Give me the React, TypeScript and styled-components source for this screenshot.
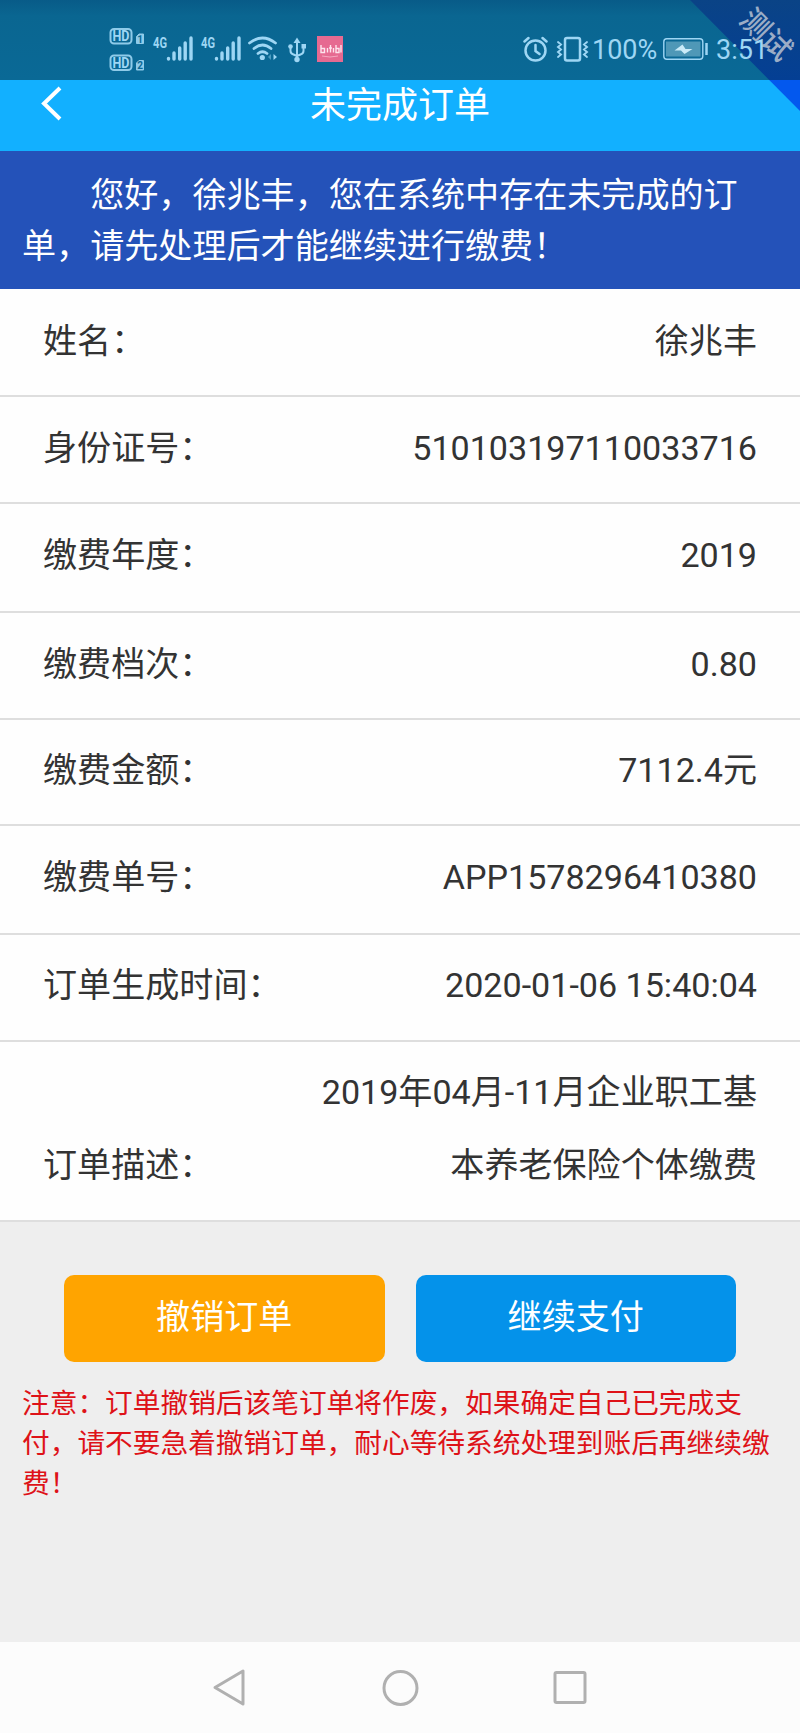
import React from 'react';
import styled, { createGlobalStyle } from 'styled-components';

const GlobalStyle = createGlobalStyle`
  * { box-sizing: border-box; }
  body {
    margin: 0;
    background: #eeeeee;
    font-family: Roboto, 'Noto Sans CJK SC', sans-serif;
  }
`;

const Screen = styled.div`
  position: relative;
  display: flex;
  flex-direction: column;
  width: 800px;
  height: 1733px;
  overflow: hidden;
  background: #eeeeee;
`;

const StatusBar = styled.div`
  display: flex;
  flex: none;
  justify-content: space-between;
  align-items: flex-start;
  height: 80px;
  padding: 28px 23px 0 109px;
  background: linear-gradient(#085b88 0, #0a6691 16px, #0a6996 80px);
  color: #9ed6f4;
`;

const StatusGroup = styled.div`
  display: flex;
  align-items: flex-start;
`;

const StatusText = styled.span<{ $width: number; $gap?: number }>`
  position: relative;
  z-index: 2;
  width: ${(p) => p.$width}px;
  margin-right: ${(p) => p.$gap ?? 0}px;
  margin-top: 8px;
  font-size: 27px;
  line-height: 28px;
  white-space: nowrap;
`;

const TestRibbon = styled.div`
  position: absolute;
  top: 0;
  right: 0;
  width: 110px;
  height: 111px;
  clip-path: polygon(0 0, 100% 0, 100% 100%);
  background: linear-gradient(#0a4386 0, #043f94 80px, #0358ee 80px);
`;

const RibbonText = styled.span`
  position: absolute;
  top: 17px;
  left: 45px;
  width: 62px;
  color: #9badc6;
  font-size: 29.5px;
  font-weight: 500;
  line-height: 36px;
  text-align: center;
  transform: rotate(45deg);
`;

const TitleBar = styled.header`
  display: grid;
  flex: none;
  grid-template-columns: 100px 1fr 100px;
  height: 71px;
  background: #12b0ff;
  color: #fff;
`;

const Title = styled.h1`
  margin: 0;
  font-size: 36px;
  font-weight: 400;
  line-height: 52px;
  text-align: center;
`;

const BackIcon = styled.svg`
  margin: 4px 0 0 37px;
`;

const Banner = styled.p`
  flex: none;
  height: 138px;
  margin: 0;
  padding: 19px 22px 0;
  background: #2452b9;
  color: #fff;
  font-size: 34.1px;
  line-height: 51px;
  text-indent: 2em;
`;

const Details = styled.dl`
  flex: none;
  margin: 0;
  background: #fefefe;
`;

const Row = styled.div<{ $height: number; $bottom: number }>`
  display: flex;
  justify-content: space-between;
  align-items: flex-end;
  height: ${(p) => p.$height}px;
  padding: 0 43px ${(p) => p.$bottom}px;
  border-bottom: 2px solid #dedede;
  color: #333;
  font-size: 34.1px;
  line-height: 73px;
`;

const Label = styled.dt`
  flex: none;
`;

const Value = styled.dd`
  max-width: 440px;
  margin: 0;
  text-align: right;
`;

const Actions = styled.div`
  display: flex;
  flex: none;
  gap: 31px;
  padding: 53px 64px 0;
`;

const ActionButton = styled.button<{ $color: string }>`
  flex: 1;
  height: 87px;
  padding: 0 0 10px;
  border: 0;
  border-radius: 10px;
  background: ${(p) => p.$color};
  color: #fff;
  font: inherit;
  font-size: 34.1px;
`;

const Notice = styled.p`
  flex: 1;
  margin: 0;
  padding: 22px 22px 0;
  color: #de1218;
  font-size: 27.7px;
  line-height: 40.2px;
`;

const NavBar = styled.nav`
  display: flex;
  flex: none;
  justify-content: space-between;
  height: 91px;
  padding: 24px 210px 0 211px;
  background: #fcfcfc;
`;

const details = [
  { label: '姓名：', value: '徐兆丰', height: 108, bottom: 17 },
  { label: '身份证号：', value: '510103197110033716', height: 107, bottom: 17 },
  { label: '缴费年度：', value: '2019', height: 109, bottom: 19 },
  { label: '缴费档次：', value: '0.80', height: 107, bottom: 17 },
  { label: '缴费金额：', value: '7112.4元', height: 106, bottom: 17 },
  { label: '缴费单号：', value: 'APP1578296410380', height: 109, bottom: 19 },
  { label: '订单生成时间：', value: '2020-01-06 15:40:04', height: 107, bottom: 18 },
  { label: '订单描述：', value: '2019年04月-11月企业职工基本养老保险个体缴费', height: 180, bottom: 18 },
];

const simCards = [
  { slot: '1', y: 28 },
  { slot: '2', y: 54.5 },
];

const NetworkIcons = () => (
  <svg width="240" height="46" viewBox="109 28 240 46" fill="none" fontFamily="Roboto" fontWeight="700">
    {simCards.map(({ slot, y }) => (
      <g key={slot} transform={`translate(109 ${y})`}>
        <rect x="1.500" y="1" width="21" height="14.500" rx="3.500" stroke="#8fcbe9" strokeWidth="2" />
        <text x="3.500" y="13.200" fontSize="14" textLength="17" lengthAdjust="spacingAndGlyphs" fill="#9ed6f4">HD</text>
        <path d="M30 6h4.500v9.500h-7V8.500z" fill="#8fcbe9" stroke="#8fcbe9" strokeLinejoin="round" />
        <text x="31" y="14.500" fontSize="10" textAnchor="middle" fill="#0a6996">{slot}</text>
      </g>
    ))}
    {[0, 48].map((x) => (
      <g key={x} transform={`translate(${x} 0)`}>
        <text x="153" y="47.500" fontSize="15.500" fill="#9ed6f4" textLength="14" lengthAdjust="spacingAndGlyphs">4G</text>
        <path d="M168.500 58.500v.5M174 53v6M179.700 48v11M185.200 43v16M191 38v21" stroke="#9ed6f4" strokeWidth="3.400" strokeLinecap="round" />
      </g>
    ))}
    <path d="M249.500 43Q262.500 33 275.500 43M254 48.500Q262.500 41.500 271 48.500M258 53.500Q262.500 50 267 53.500" stroke="#9ed6f4" strokeWidth="2.800" strokeLinecap="round" />
    <circle cx="262.300" cy="57.500" r="2.600" fill="#9ed6f4" />
    <path d="M273.500 54v6l3.500-3z" fill="#9ed6f4" />
    <path d="M271 54v6l-3-3z" fill="#4a9bc0" />
    <path d="M297 41v18M290.500 47v4q0 2.500 3 3.500l3.500 1.500M303.500 47v4q0 2.500-3 3.500l-3.500 1.500" stroke="#9ed6f4" strokeWidth="2" />
    <path d="M297 37.500l3.500 5.500h-7z" fill="#9ed6f4" />
    <circle cx="290.500" cy="46.500" r="2.300" fill="#9ed6f4" />
    <path d="M301.500 44h4.500v4.500h-4.500z" fill="#9ed6f4" />
    <circle cx="297" cy="59.500" r="2.700" fill="#9ed6f4" />
    <path d="M317 36h26v26h-26z" fill="#e66a91" />
    <path d="M321 45v7.500h3.500v-4H321M327.500 48v4.500M330.500 45v7.500M329 48h3M333.500 48v4.500M336 45v7.500h3v-4h-3M341 45v7.500" stroke="#fde4ed" strokeWidth="1.400" />
    <path d="M322 56q8 2 16 0" stroke="#f4a9c1" />
  </svg>
);

const AlarmIcons = () => (
  <svg width="69" height="34" viewBox="522 28 69 34" fill="none" stroke="#9ed6f4" strokeWidth="2.500" strokeLinecap="round">
    <circle cx="534.500" cy="50.500" r="10" />
    <path d="M534.500 45v6l4 3M523.500 41.500l4-3.500M545.500 41.500l-4-3.500" />
    <rect x="564" y="38" width="15" height="22.500" rx="2" />
    <path d="M557 42l3 2.500-3 2.500 3 2.500-3 2.500 3 2.500-3 2.500M586 42l-3 2.500 3 2.500-3 2.500 3 2.500-3 2.500 3 2.500" strokeWidth="1.900" />
  </svg>
);

const BatteryIcon = () => (
  <svg width="53" height="34" viewBox="662 28 53 34" fill="none">
    <rect x="662.800" y="38.800" width="39" height="20.500" rx="3" stroke="#9ed6f4" strokeWidth="1.400" />
    <path d="M665 41.500h34.500v15h-34.500z" fill="#4f98b7" />
    <path d="M705.500 43v12" stroke="#9ed6f4" strokeWidth="2.500" />
    <path d="M681.500 44.500l-8 6h6.500l3.500 3.500 8-5h-7z" fill="#caebf8" />
  </svg>
);

export default function App() {
  return (
    <Screen>
      <GlobalStyle />
      <StatusBar>
        <StatusGroup>
          <NetworkIcons />
        </StatusGroup>
        <StatusGroup>
          <AlarmIcons />
          <StatusText $width={62} $gap={9}>100%</StatusText>
          <BatteryIcon />
          <StatusText $width={61}>3:51</StatusText>
        </StatusGroup>
      </StatusBar>
      <TitleBar>
        <BackIcon width="30" height="42" viewBox="0 0 30 42" fill="none" stroke="#fff" strokeWidth="4">
          <path d="M23 4L7 19.500 23 35" />
        </BackIcon>
        <Title>未完成订单</Title>
      </TitleBar>
      <Banner>您好，徐兆丰，您在系统中存在未完成的订单，请先处理后才能继续进行缴费！</Banner>
      <Details>
        {details.map((d) => (
          <Row key={d.label} $height={d.height} $bottom={d.bottom}>
            <Label>{d.label}</Label>
            <Value>{d.value}</Value>
          </Row>
        ))}
      </Details>
      <Actions>
        <ActionButton $color="#ffa400">撤销订单</ActionButton>
        <ActionButton $color="#0492ea">继续支付</ActionButton>
      </Actions>
      <Notice>注意：订单撤销后该笔订单将作废，如果确定自己已完成支付，请不要急着撤销订单，耐心等待系统处理到账后再继续缴费！</Notice>
      <NavBar>
        <svg width="36" height="44" viewBox="0 0 36 44" fill="none" stroke="#b0b0b0" strokeWidth="3" strokeLinejoin="round">
          <path d="M32 5v33L4 21.500z" />
        </svg>
        <svg width="40" height="44" viewBox="0 0 40 44" fill="none" stroke="#b0b0b0" strokeWidth="3">
          <circle cx="21.500" cy="22" r="16.500" />
        </svg>
        <svg width="40" height="44" viewBox="0 0 40 44" fill="none" stroke="#b0b0b0" strokeWidth="3">
          <rect x="5" y="6.500" width="30" height="30" rx="1.500" />
        </svg>
      </NavBar>
      <TestRibbon>
        <RibbonText>测试</RibbonText>
      </TestRibbon>
    </Screen>
  );
}
